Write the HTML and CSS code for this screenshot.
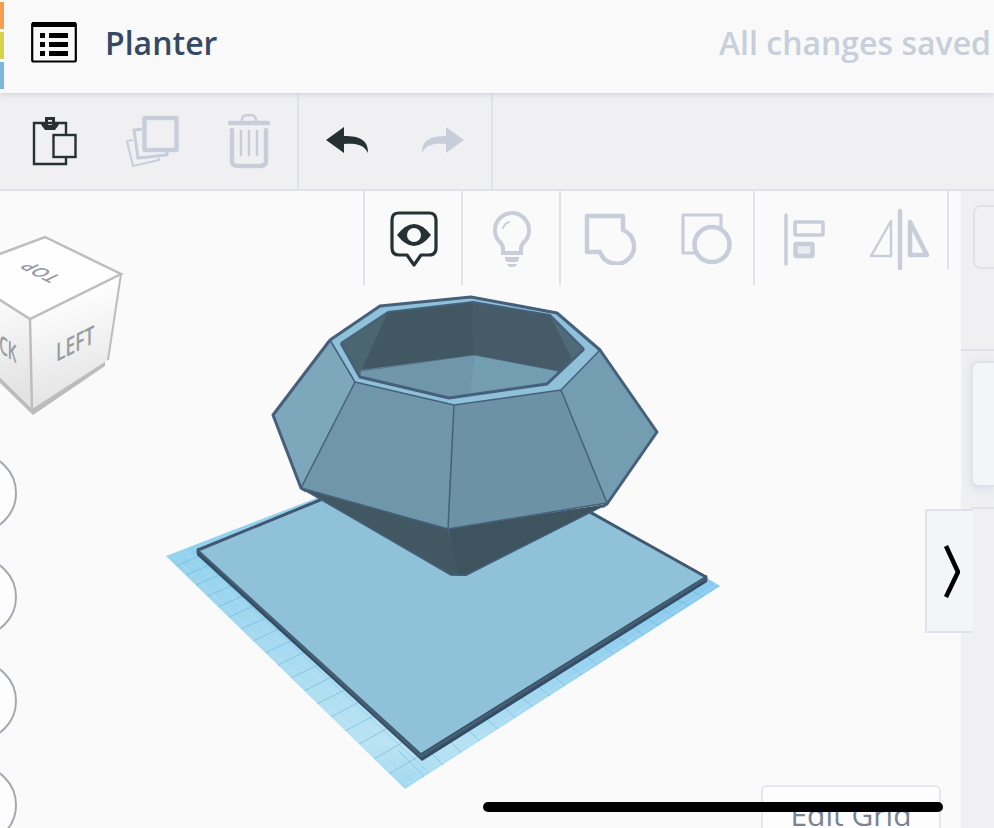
FILE: index.html
```html
<!DOCTYPE html>
<html lang="en">
<head>
<meta charset="utf-8">
<meta name="viewport" content="width=device-width, initial-scale=1">
<title>Planter</title>
<link rel="stylesheet" href="styles.css">
</head>
<body>
<header class="header">
  <div class="logo"><i class="tile orange"></i><i class="tile green"></i><i class="tile blue"></i></div>
  <button class="menu" aria-label="Designs">
    <svg width="46" height="42" viewBox="0 0 46 42"><rect x="1.2" y="2" width="43.600" height="38.500" rx="1.500" fill="none" stroke="#000" stroke-width="2.200"/><path d="M1 1h44v5H1zM9 12h5v5H9zM18 12h19v5H18zM9 21h5v5H9zM18 21h19v5H18zM9 30h5v5H9zM18 30h19v5H18z"/></svg>
  </button>
  <h1 class="title">Planter</h1>
  <p class="status">All changes saved</p>
</header>

<div class="toolbar">
  <div class="group edit">
    <button aria-label="Paste"><svg width="46" height="50" viewBox="0 0 46 50"><g fill="none" stroke="#253133" stroke-width="2.400"><path d="M34 18V7H2v41h32v-7"/><rect x="21.500" y="19" width="22" height="22"/></g><path fill="#253133" fill-rule="evenodd" d="M13 6V1h10v5h5l-2 4-3 4H13l-3-4-2-4zm3-2v5h4V4z"/></svg></button>
    <button aria-label="Duplicate"><svg class="pale" width="54" height="54" viewBox="0 0 54 54"><g fill="none"><path stroke-width="2" d="M8 26l-6 1 6 25 26-6v-2"/><path stroke-width="3" d="M17 15l-8 1 4 28 29-3v-5"/><rect x="19.500" y="4" width="32" height="32" rx="1" stroke-width="4.500"/></g></svg></button>
    <button aria-label="Delete"><svg class="pale" width="44" height="56" viewBox="0 0 44 56"><g fill="none" stroke-linecap="round"><path stroke-width="2.500" d="M15 8c0-5 2-6 7-6s7 1 7 6"/><path stroke-width="4.500" d="M3 10h38"/><path stroke-width="4.500" d="M5 17v31q0 5 6 5h22q6 0 6-5V17"/><path stroke-width="2.500" d="M14 18v24M22 18v24M30 18v24"/></g></svg></button>
  </div>
  <div class="group">
    <button aria-label="Undo"><svg width="44" height="30" viewBox="0 0 44 30"><path fill="#253133" d="M1 14L19 1v9c16 0 24 4 24 17-4-8-11-10-24-9v9z"/></svg></button>
    <button aria-label="Redo"><svg width="44" height="30" viewBox="0 0 44 30"><path fill="#c8ced9" d="M43 14L25 1v9C9 10 1 14 1 27c4-8 11-10 24-9v9z"/></svg></button>
  </div>
</div>

<main class="main">
  <section class="canvas" aria-label="Workplane">
    <svg class="scene" width="565" height="505" viewBox="160 290 565 505" role="img" aria-label="Faceted planter on a workplane">
      <defs>
        <linearGradient id="grid" x1="0" y1="0" x2="0" y2="1"><stop offset=".2" stop-color="#93d1ee"/><stop offset=".85" stop-color="#bae3f3"/><stop offset="1" stop-color="#a2d8f0"/></linearGradient>
        <linearGradient id="gridFade" x1="0" x2="1"><stop offset=".5" stop-color="#8acbed" stop-opacity="0"/><stop offset="1" stop-color="#8acbed"/></linearGradient>
        <clipPath id="plane"><path d="M166 556L340 489 590 510 720 586 405 789z"/></clipPath>
      </defs>
      <path fill="url(#grid)" d="M166 556L340 489 590 510 720 586 405 789z"/>
      <path fill="url(#gridFade)" d="M166 556L340 489 590 510 720 586 405 789z"/>
      <g clip-path="url(#plane)" fill="none" stroke="#65b5dc">
        <path stroke-opacity=".6" d="M176 566l45-19M186 575l45-19M196 585l45-19M207 596l45-19M218 607l45-20M229 617l45-20M241 629l45-20M253 641l45-21M265 653l45-21M278 665l45-22M291 678l45-22M304 691l45-23M317 704l45-23M331 717l45-24M345 731l45-24M359 744l45-25M374 759l45-26M389 774l45-27"/>
        <path stroke-opacity=".55" d="M424 777l-25-26M443 765l-25-25M462 753l-25-24M480 741l-25-23M498 729l-25-22M516 718l-25-21M533 707l-25-21M550 696l-25-20M566 686l-25-20M582 675l-25-19M598 665l-25-18M614 654l-25-17M629 645l-25-17M644 635l-25-16M659 626l-25-15M674 616l-25-14M689 606l-25-14M704 597l-25-13"/>
        <path stroke-opacity=".3" d="M189 548L428 772"/>
        <path stroke="#e4f6fc" stroke-opacity=".25" d="M171 554L410 785M183 550L422 776M405 785L717 584"/>
      </g>
      <path fill="#334d69" d="M197 548L421 751 707 575v7L422 761 197 555z"/>
      <path fill="none" stroke="#465f70" stroke-width="3" d="M199 551L421 756 706 578"/>
      <path fill="#8fc2d9" d="M199 550L321 500 448 510 590 513 705 576 421 753z"/>
      <path fill="none" stroke="#405871" stroke-width="3" stroke-linejoin="round" d="M198 553v-3L325 498M588 511l118 66v4"/>

      <path fill="#415862" d="M301 488L448 529 460 576 451 575z"/>
      <path fill="#3d535d" d="M448 529L607 504 466 576H459z"/>
      <path fill="#7da7bb" d="M330 340L355 382 301 488 273 415z"/>
      <path fill="#6f97a9" d="M355 382L454 405 448 529 301 488z"/>
      <path fill="#6c92a5" d="M454 405L561 390 607 503 448 529z"/>
      <path fill="#749db2" d="M600 350L657 432 607 503 561 390z"/>
      <path fill="#8fc2d9" d="M330 340L380 306 471 296 557 312 600 350 561 390 454 405 355 382z"/>
      <path fill="#455c68" d="M341 343L388 312 473 302 550 315 584 349 558 373 361 375z"/>
      <path fill="#4c6670" d="M341 343L388 312 361 375z"/>
      <path fill="#415862" d="M388 312L473 302V356L361 371z"/>
      <path fill="#4f6b78" d="M550 315L584 349 572 359z"/>
      <path fill="#6f97a9" d="M361 370L474 355 471 396 449 398 360 377z"/>
      <path fill="#739eb2" d="M474 355L558 371 547 384 470 396z"/>
      <g fill="none" stroke="#465f7b" stroke-linejoin="round">
        <path stroke-width="3" d="M330 340L380 306 471 297 557 313 600 350 657 432 607 504 602 507M330 340L273 415 301 488 306 491"/>
        <path stroke-width="1.500" d="M330 340L355 382 454 405 561 390 600 350M355 382L301 488M454 405L448 529M561 390L607 503M301 488L448 529 607 503M301 488L451 575H466L607 504"/>
        <path stroke-width="2" d="M341 343L388 312 473 302 550 315 584 349"/>
        <path stroke-width="3" d="M341 343L360 377 449 398 547 384 584 349"/>
        <path stroke-width="1" stroke-opacity=".6" d="M473 302L474 355 361 371M474 355L558 371"/>
      </g>
    </svg>

    <svg class="cube" width="125" height="182" viewBox="0 235 125 182" role="img" aria-label="View cube">
      <defs><linearGradient id="face" x1="0" y1="0" x2=".2" y2="1"><stop offset=".2" stop-color="#fff"/><stop offset="1" stop-color="#e3e3e4"/></linearGradient></defs>
      <path fill="#bcbcbc" d="M0 374L33 405 105 360V366L33 415 0 383z"/>
      <path fill="#fefefe" d="M-46 271L45 237 121 274 30 319z"/>
      <path fill="url(#face)" d="M30 319L121 274 108 360 32 409z"/>
      <path fill="url(#face)" d="M-46 271L30 319 32 409 -30 348z"/>
      <g fill="none" stroke="#bdbdbd" stroke-width="2.500"><path d="M-46 271L45 237 121 274 30 319zM30 319L32 410"/><path stroke-width="2" d="M121 274L108 360"/></g>
      <text class="face" transform="matrix(.7 -.35 0 1 56 362)">LEFT</text>
      <text class="face" transform="matrix(.55 .38 0 1 -19 339)">BACK</text>
      <text class="face top" transform="matrix(-.69 -.35 .75 -.38 62 277)">TOP</text>
    </svg>

    <nav class="views" aria-label="View">
      <button aria-label="Home view"></button><button aria-label="Fit view"></button><button aria-label="Zoom in"></button><button aria-label="Zoom out"></button>
    </nav>

    <div class="tools">
      <div class="group"><button aria-label="Show all"><svg width="50" height="58" viewBox="0 0 50 58"><path fill="none" stroke="#253133" stroke-width="3.200" stroke-linejoin="round" d="M10 3h30q7 0 7 7v28q0 7-7 7h-8l-7 10-7-10h-8q-7 0-7-7V10q0-7 7-7z"/><path fill="#253133" fill-rule="evenodd" d="M8 25q17-22 34 0-17 22-34 0zm17-7a7 7 0 1 0 0 14 7 7 0 0 0 0-14z"/></svg></button></div>
      <div class="group"><button aria-label="Light"><svg class="pale" width="40" height="58" viewBox="0 0 40 58"><path fill="none" stroke-width="4" d="M11 43v-5q0-3-4-7A17 17 0 1 1 33 31q-4 4-4 7v5z"/><path fill="none" stroke-width="2" stroke-linecap="round" d="M11 18q2-5 6-6"/><path fill="#c8ced9" stroke="none" d="M13 47h14q0 5-3 5h-8q-3 0-3-5zM15 54h10q-1 3-3 3h-4q-2 0-3-3z"/></svg></button></div>
      <div class="group">
        <button aria-label="Group"><svg class="pale" width="52" height="52" viewBox="0 0 52 52"><path fill="none" stroke-width="4.500" stroke-linejoin="round" d="M3 3h36v14A17.500 17.500 0 1 1 16 39H3z"/></svg></button>
        <button aria-label="Ungroup"><svg class="pale" width="52" height="52" viewBox="0 0 52 52"><g fill="none"><path stroke-width="3.200" stroke-linejoin="round" d="M41 15V2H3v38h13"/><circle cx="32" cy="31.500" r="17.500" stroke-width="4.500"/></g></svg></button>
      </div>
      <div class="group">
        <button aria-label="Align"><svg class="pale" width="42" height="54" viewBox="0 0 42 54"><path fill="none" stroke-width="3.500" stroke-linecap="round" d="M3 3v49"/><rect x="12" y="10" width="28" height="13" rx="1" fill="none" stroke-width="3.500"/><rect x="12.500" y="32" width="17" height="12" rx="1" fill="#e8ebef" stroke-width="4.500"/></svg></button>
        <button aria-label="Mirror"><svg class="pale" width="62" height="62" viewBox="0 0 62 62"><g fill="none" stroke-linejoin="round" stroke-linecap="round"><path stroke-width="2.500" d="M22 13v35H2z"/><path stroke-width="4.500" d="M31 3v57"/><path stroke-width="4.500" d="M41 14v33h17z"/></g></svg></button>
      </div>
      <i class="endline"></i>
    </div>

    <button class="editgrid">Edit Grid</button>
  </section>

  <aside class="side">
    <div class="picker"></div>
    <div class="card"></div>
    <div class="more"></div>
    <button class="handle" aria-label="Collapse panel"><svg width="18" height="54" viewBox="0 0 18 54"><path fill="none" stroke="#000" stroke-width="4.500" stroke-linejoin="bevel" d="M3 2L15 28 3 53"/></svg></button>
  </aside>
</main>
<div class="homebar"></div>
</body>
</html>
```
FILE: styles.css
```css
* { box-sizing: border-box; }

body {
  margin: 0;
  height: 100vh;
  display: flex;
  flex-direction: column;
  overflow: hidden;
  background: #fafafa;
  font-family: "Open Sans", "Noto Sans", sans-serif;
}

button {
  display: flex;
  align-items: center;
  justify-content: center;
  margin: 0;
  padding: 0;
  border: 0;
  background: none;
  font: inherit;
}

svg { display: block; }
.pale { stroke: #c8ced9; }

.header {
  position: relative;
  z-index: 1;
  flex: none;
  display: flex;
  align-items: center;
  height: 93px;
  padding-right: 3px;
  background: #f9f9f9;
  box-shadow: 0 1px 6px #c6ccd6;
}

.logo {
  align-self: stretch;
  display: flex;
  flex-direction: column;
  gap: 3px;
  width: 4px;
  padding-top: 2px;
}
.tile { height: 27px; }
.orange { background: #f2a04f; }
.green { background: #d6d34b; }
.blue { background: #7cb6d8; }

.menu { margin: 0 28px 10px 27px; }

.title,
.status {
  margin: 0 0 8px;
  font-size: 32px;
  font-weight: 600;
  line-height: 44px;
  white-space: nowrap;
}
.title { flex: 1; color: #354962; }
.status { color: #c8cfda; }

.toolbar {
  flex: none;
  display: flex;
  height: 98px;
  border-bottom: 2px solid #dfe2e8;
  background: #f0f0f3;
}
.group { display: flex; }
.toolbar .group { border-right: 2px solid #dfe2e8; }
.toolbar button { width: 96px; }
.toolbar .edit { padding-left: 6px; }
.toolbar .edit button { width: 97px; }

.main { flex: 1; display: flex; min-height: 0; }

.canvas {
  position: relative;
  flex: 1;
  min-width: 0;
  overflow: hidden;
}
.scene { position: absolute; left: 160px; top: 99px; }
.cube { position: absolute; left: 0; top: 44px; }
.face { font: 600 25px "Open Sans", sans-serif; fill: #979ba3; }
.top { font-size: 23px; }

.views {
  position: absolute;
  left: -63px;
  top: 262px;
  display: flex;
  flex-direction: column;
  gap: 24px;
}
.views button {
  width: 80px;
  height: 80px;
  border: 2px solid #a5a8ad;
  border-radius: 50%;
  background: #fdfdfd;
}

.tools {
  position: relative;
  display: flex;
  justify-content: flex-end;
  padding-right: 12px;
}
.tools .group { height: 94px; border-left: 2px solid #dfe2e8; }
.tools button { width: 96px; padding: 2px 0 0 2px; }
.endline { width: 2px; height: 78px; background: #dfe2e8; }

.editgrid {
  position: absolute;
  right: 20px;
  bottom: -34px;
  width: 180px;
  height: 77px;
  padding-top: 6px;
  align-items: flex-start;
  border: 2px solid #e6e7ec;
  border-radius: 6px;
  background: #fdfdfd;
  color: #7a8492;
  font-size: 30px;
  line-height: 44px;
}

.side {
  position: relative;
  flex: none;
  width: 33px;
  background: #f0f0f3;
}
.side::before {
  content: "";
  position: absolute;
  top: 158px;
  left: 0;
  right: 0;
  height: 2px;
  background: #dfe2e8;
}
.picker,
.card {
  border: 2px solid #dfe2e8;
  border-right: 0;
  border-radius: 7px 0 0 7px;
}
.picker { height: 64px; margin: 14px 0 92px 12px; }
.card {
  height: 126px;
  margin: 0 0 20px 10px;
  background: #f3f5f8;
  box-shadow: 0 2px 12px #d9dce4;
}
.more { height: 2px; margin-left: 10px; background: #dfe2e8; }
.handle {
  position: absolute;
  left: -36px;
  top: 318px;
  width: 48px;
  height: 124px;
  padding-left: 3px;
  border: 2px solid #dfe2e8;
  border-right: 0;
  background: #f3f5f8;
}

.homebar {
  position: fixed;
  z-index: 2;
  right: 51px;
  bottom: 16px;
  width: 460px;
  height: 10px;
  border-radius: 5px;
  background: #000;
}
```
